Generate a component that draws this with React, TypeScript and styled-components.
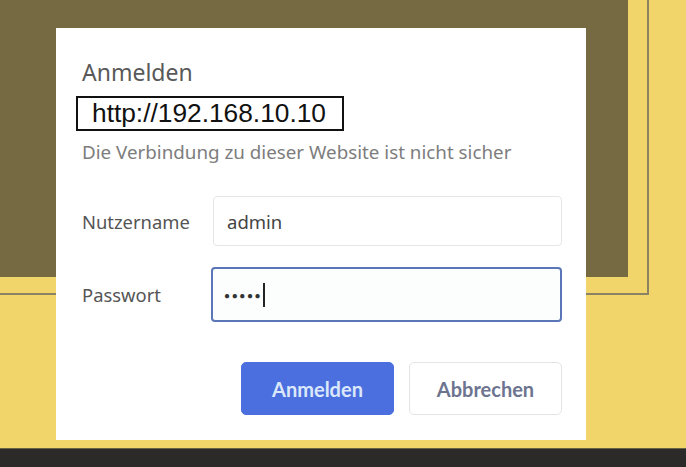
import * as React from 'react';
import styled, { createGlobalStyle } from 'styled-components';

const GlobalStyle = createGlobalStyle`
  html, body {
    margin: 0;
    padding: 0;
    background: #f1d56b;
  }
  * {
    box-sizing: border-box;
  }
`;

/**
 * Whole screen, yellow wall behind the dialog.
 */
const Screen = styled.div`
  position: relative;
  width: 686px;
  height: 467px;
  overflow: hidden;
  display: flex;
  flex-direction: column;
  background: #f1d56b;
`;

/**
 * Thin outline around the dark panel.
 */
const Frame = styled.div`
  width: 649px;
  height: 295px;
  border-right: 2px solid #8b8163;
  border-bottom: 2px solid #8b8163;
`;

const DarkPanel = styled.div`
  width: 628px;
  height: 277px;
  background: #766a42;
`;

const Filler = styled.div`
  flex: 1;
`;

const BottomBar = styled.div`
  height: 19px;
  background: #2b2a28;
  border-top: 1px solid #6b6345;
`;

/**
 * Login dialog floating over the page.
 */
const Dialog = styled.div`
  position: absolute;
  left: 56px;
  top: 28px;
  width: 530px;
  height: 412px;
  background: #ffffff;
  padding: 29px 24px 0 26px;
  font-family: 'Noto Sans', 'Open Sans', sans-serif;
  display: flex;
  flex-direction: column;
`;

const Title = styled.div`
  font-size: 23px;
  line-height: 30px;
  color: #595959;
`;

const UrlBox = styled.div`
  align-self: flex-start;
  margin: 9px 0 0 -6px;
  width: 268px;
  height: 35px;
  border: 2px solid #111111;
  padding: 0 0 0 14px;
  font-family: 'Liberation Sans', Arial, sans-serif;
  font-size: 26.3px;
  line-height: 31px;
  color: #111111;
  white-space: nowrap;
`;

const Warning = styled.div`
  margin-top: 9px;
  font-size: 18.8px;
  line-height: 24px;
  color: #7d7d7d;
  white-space: nowrap;
`;

const Form = styled.div`
  margin-top: 32px;
  display: flex;
  flex-direction: column;
  gap: 21px;
`;

const Row = styled.div`
  display: flex;
  align-items: center;
`;

const Label = styled.div`
  width: 131px;
  font-size: 18.4px;
  color: #555555;
`;

const Field = styled.div<{ focused?: boolean }>`
  flex: 1;
  height: ${p => (p.focused ? '55px' : '50px')};
  margin-left: ${p => (p.focused ? '-2px' : '0')};
  border: ${p => (p.focused ? '2px solid #5a76b8' : '1px solid #e6e6e6')};
  border-radius: 4px;
  background: ${p => (p.focused ? '#fbfefd' : '#ffffff')};
  display: flex;
  align-items: center;
  padding-left: ${p => (p.focused ? '11px' : '13px')};
  font-size: 18.5px;
  color: #444444;
`;

const Dots = styled.span`
  font-size: 10px;
  letter-spacing: 1.6px;
  color: #333333;
`;

const Caret = styled.span`
  display: inline-block;
  width: 2px;
  height: 24px;
  margin-left: 1px;
  background: #222222;
`;

const Actions = styled.div`
  margin-top: 40px;
  display: flex;
  justify-content: flex-end;
  gap: 15px;
`;

const Button = styled.button<{ primary?: boolean }>`
  width: 153px;
  height: 53px;
  border-radius: 5px;
  border: 1px solid ${p => (p.primary ? '#4b6fde' : '#e4e4e4')};
  background: ${p => (p.primary ? '#4b6fde' : '#ffffff')};
  color: ${p => (p.primary ? '#dbe8fb' : '#6d7490')};
  font-family: Lato, 'Noto Sans', sans-serif;
  font-weight: 700;
  font-size: 20px;
  padding: 0;
`;

export default function App(): JSX.Element {
  return (
    <Screen>
      <GlobalStyle />
      <Frame>
        <DarkPanel />
      </Frame>
      <Filler />
      <BottomBar />
      <Dialog>
        <Title>Anmelden</Title>
        <UrlBox>http://192.168.10.10</UrlBox>
        <Warning>Die Verbindung zu dieser Website ist nicht sicher</Warning>
        <Form>
          <Row>
            <Label>Nutzername</Label>
            <Field>admin</Field>
          </Row>
          <Row>
            <Label>Passwort</Label>
            <Field focused>
              <Dots>●●●●●</Dots>
              <Caret />
            </Field>
          </Row>
        </Form>
        <Actions>
          <Button primary>Anmelden</Button>
          <Button>Abbrechen</Button>
        </Actions>
      </Dialog>
    </Screen>
  );
}
